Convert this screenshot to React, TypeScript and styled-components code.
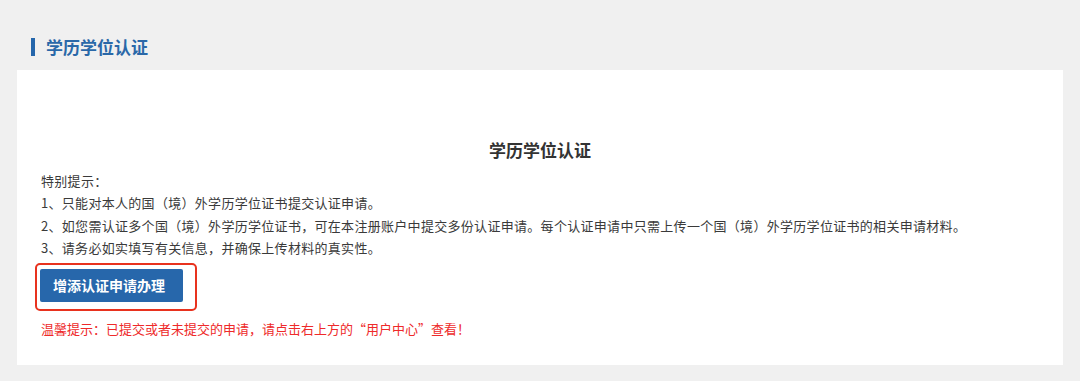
import React from "react";
import styled, { createGlobalStyle } from "styled-components";

const Global = createGlobalStyle`
  html, body { margin: 0; padding: 0; background: #f0f0f0; }
  body { font-family: "Noto Sans CJK SC", "Noto Sans", sans-serif; }
`;

const Page = styled.div`
  width: 1080px;
  height: 381px;
  background: #f0f0f0;
  padding: 37px 17px 0 17px;
  box-sizing: border-box;
`;

const SectionTitle = styled.h2`
  margin: 0 0 13px 14px;
  display: flex;
  align-items: center;
  gap: 11px;
  font-size: 17px;
  line-height: 20px;
  font-weight: 700;
  color: #2a68a8;
  &::before {
    content: "";
    width: 4px;
    height: 18px;
    background: #2566ab;
  }
`;

const Card = styled.div`
  background: #ffffff;
  height: 295px;
  box-sizing: border-box;
  padding: 68px 24px 0 24px;
  display: flex;
  flex-direction: column;
`;

const Heading = styled.h3`
  margin: 0;
  text-align: center;
  font-size: 17px;
  line-height: 24px;
  font-weight: 700;
  color: #333;
`;

const Notes = styled.div`
  margin-top: 8px;
  font-size: 13px;
  line-height: 22.4px;
  letter-spacing: 0.3px;
  color: #3a3a3a;
`;

const NoteLine = styled.div``;

const ButtonFrame = styled.div`
  align-self: flex-start;
  margin: 3px 0 0 -6px;
  padding: 4px 12px 7px 3px;
  border: 2px solid #e8321e;
  border-radius: 5px;
`;

const PrimaryButton = styled.button`
  display: block;
  width: 143px;
  height: 33px;
  border: none;
  border-radius: 2px;
  background: #2767ab;
  color: #fff;
  font-family: inherit;
  font-size: 14px;
  line-height: 20px;
  font-weight: 600;
  text-align: left;
  padding: 0 0 1px 13px;
  cursor: pointer;
`;

const Warning = styled.div`
  margin-top: 9px;
  font-size: 13px;
  line-height: 18px;
  color: #ee2a2a;
`;

export default function App() {
  return (
    <>
      <Global />
      <Page>
        <SectionTitle>学历学位认证</SectionTitle>
        <Card>
          <Heading>学历学位认证</Heading>
          <Notes>
            <NoteLine>特别提示：</NoteLine>
            <NoteLine>1、只能对本人的国（境）外学历学位证书提交认证申请。</NoteLine>
            <NoteLine>
              2、如您需认证多个国（境）外学历学位证书，可在本注册账户中提交多份认证申请。每个认证申请中只需上传一个国（境）外学历学位证书的相关申请材料。
            </NoteLine>
            <NoteLine>3、请务必如实填写有关信息，并确保上传材料的真实性。</NoteLine>
          </Notes>
          <ButtonFrame>
            <PrimaryButton>增添认证申请办理</PrimaryButton>
          </ButtonFrame>
          <Warning>温馨提示：已提交或者未提交的申请，请点击右上方的“用户中心”查看！</Warning>
        </Card>
      </Page>
    </>
  );
}
